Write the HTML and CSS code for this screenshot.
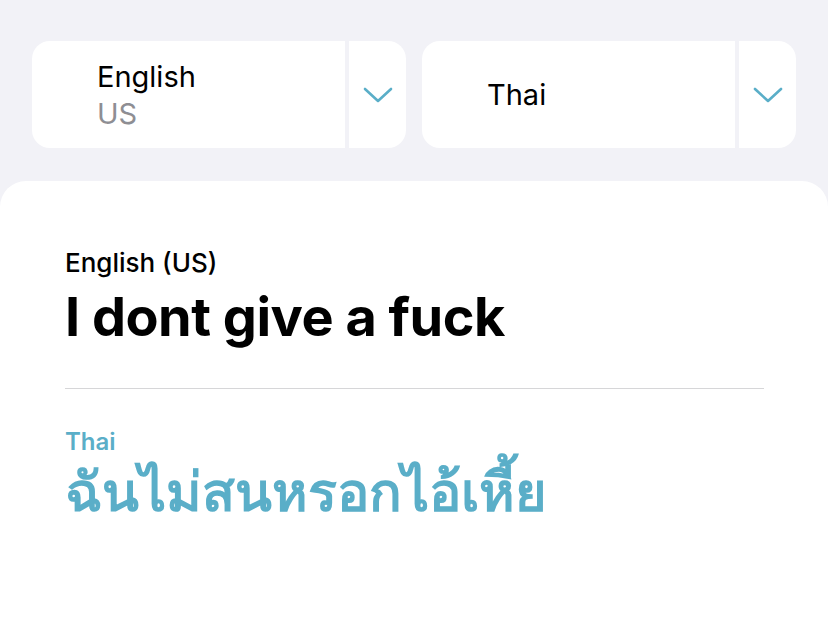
FILE: index.html
```html
<!DOCTYPE html>
<html>
<head>
<meta charset="utf-8">
<link rel="stylesheet" href="styles.css">
</head>
<body>
<div class="top">
  <div class="picker">
    <div class="lang">
      <div class="name">English</div>
      <div class="region">US</div>
    </div>
    <div class="chev">
      <svg width="30" height="16" viewBox="0 0 30 16"><path d="M2 2 L15 14 L28 2" fill="none" stroke="#5aaec8" stroke-width="2.6" stroke-linecap="round" stroke-linejoin="round"/></svg>
    </div>
  </div>
  <div class="picker">
    <div class="lang">
      <div class="name">Thai</div>
    </div>
    <div class="chev">
      <svg width="30" height="16" viewBox="0 0 30 16"><path d="M2 2 L15 14 L28 2" fill="none" stroke="#5aaec8" stroke-width="2.6" stroke-linecap="round" stroke-linejoin="round"/></svg>
    </div>
  </div>
</div>
<div class="sheet">
  <div class="src-label">English (US)</div>
  <div class="src-text">I dont give a fuck</div>
  <div class="rule"></div>
  <div class="dst-label">Thai</div>
  <div class="dst-text">ฉันไม่สนหรอกไอ้เหี้ย</div>
</div>
</body>
</html>
```
FILE: styles.css
```css
html, body {
  margin: 0;
  padding: 0;
  height: 100%;
}
body {
  background: #f2f2f7;
  font-family: Inter, "Liberation Sans", sans-serif;
  display: flex;
  flex-direction: column;
  overflow: hidden;
}
.top {
  display: flex;
  gap: 16px;
  padding: 41px 32px 0 32px;
}
.picker {
  flex: 1;
  height: 107px;
  display: flex;
  background: #fff;
  border-radius: 18px;
  overflow: hidden;
}
.lang {
  flex: 1;
  padding-left: 65px;
  display: flex;
  flex-direction: column;
  justify-content: center;
  border-right: 4px solid #f2f2f7;
}
.name {
  font-size: 29px;
  line-height: 37px;
  color: #000;
}
.region {
  font-size: 29px;
  line-height: 37px;
  color: #8e8e93;
}
.chev {
  width: 57px;
  display: flex;
  align-items: center;
  justify-content: center;
}
.sheet {
  flex: 1;
  margin-top: 33px;
  background: #fff;
  border-radius: 26px 26px 0 0;
  padding: 67px 64px 0 65px;
}
.src-label {
  font-size: 26px;
  font-weight: 500;
  line-height: 30px;
  color: #000;
}
.src-text {
  margin-top: 4px;
  font-size: 54px;
  font-weight: 700;
  line-height: 70px;
  letter-spacing: -0.5px;
  color: #000;
}
.rule {
  height: 1px;
  background: #d6d6d8;
  margin-top: 36px;
}
.dst-label {
  margin-top: 38px;
  font-size: 24px;
  font-weight: 600;
  line-height: 30px;
  color: #5aaec8;
}
.dst-text {
  font-size: 54px;
  font-weight: 700;
  line-height: 70px;
  color: #5aaec8;
}
```
